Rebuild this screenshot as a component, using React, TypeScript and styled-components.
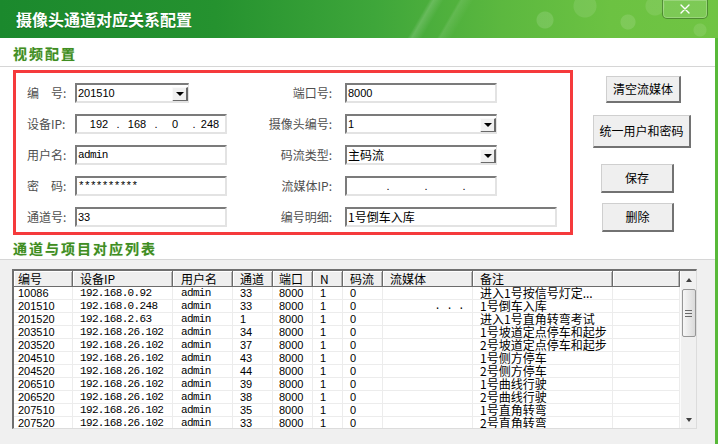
import React from "react";
import styled, { createGlobalStyle } from "styled-components";

const CJK = `"Noto Sans CJK SC", "Liberation Sans", sans-serif`;
const SANS = `"Liberation Sans", "Noto Sans CJK SC", sans-serif`;
const MONO = `"Liberation Mono", "Noto Sans CJK SC", monospace`;

type FontKind = "cjk" | "sans" | "mono";
const fontFor = (f?: FontKind) =>
  f === "mono"
    ? `font-family: ${MONO}; font-size: 11px; letter-spacing: -0.65px;`
    : f === "sans"
    ? `font-family: ${SANS}; font-size: 11px;`
    : `font-family: ${CJK}; font-size: 12px;`;

const GlobalStyle = createGlobalStyle`
  html, body { margin: 0; padding: 0; }
  body {
    width: 718px; height: 444px; overflow: hidden;
    background: #f0f0f0; font-family: ${CJK};
  }
  *, *::before, *::after { box-sizing: border-box; }
`;

const Window = styled.div`
  width: 718px;
  height: 444px;
  display: flex;
  flex-direction: column;
  overflow: hidden;
`;

const TitleBar = styled.header`
  flex: none;
  height: 38px;
  display: flex;
  justify-content: space-between;
  align-items: flex-start;
  padding: 0 10px 0 16px;
  background:
    radial-gradient(circle at 545px 20px, rgba(255,255,255,0.13) 0 8px, transparent 9px),
    radial-gradient(circle at 585px 6px, rgba(255,255,255,0.10) 0 11px, transparent 12px),
    radial-gradient(circle at 628px 22px, rgba(255,255,255,0.12) 0 7px, transparent 8px),
    radial-gradient(circle at 655px 6px, rgba(255,255,255,0.10) 0 9px, transparent 10px),
    radial-gradient(circle at 700px 30px, rgba(255,255,255,0.10) 0 6px, transparent 7px),
    linear-gradient(120deg, transparent 0 58%, rgba(255,255,255,0.16) 58.6%, transparent 60%, transparent 62%, rgba(255,255,255,0.10) 62.4%, transparent 64%),
    linear-gradient(90deg, #1b892d 0%, #25922f 30%, #3ea63a 52%, #5cb83f 70%, #6cc242 85%, #70c443 100%);
`;

const Title = styled.h1`
  margin: 0;
  font-family: ${CJK};
  font-size: 16px;
  font-weight: bold;
  line-height: 39px;
  color: #fff;
  text-shadow: 0 1px 1px rgba(0, 60, 0, 0.35);
`;

const CloseButton = styled.button`
  width: 46px;
  height: 20px;
  margin-top: -1px;
  padding: 0;
  border: 1px solid rgba(40, 90, 20, 0.55);
  border-top-color: #1d1d1d;
  border-radius: 0 0 5px 5px;
  background: rgba(255, 255, 255, 0.1);
  box-shadow: inset 0 0 0 1px rgba(255, 255, 255, 0.22);
  display: flex;
  align-items: center;
  justify-content: center;
`;

const Body = styled.main`
  flex: 1;
  min-height: 0;
  display: flex;
  flex-direction: column;
  border-right: 3px solid #58b939;
`;

const WhitePanel = styled.section`
  flex: none;
  background: #fff;
  display: flex;
  flex-direction: column;
`;

const SectionTitle = styled.h2<{ $h: number }>`
  margin: 0;
  height: ${(p) => p.$h}px;
  padding: 2px 0 0 13px;
  line-height: ${(p) => p.$h - 3}px;
  font-family: ${CJK};
  font-size: 14px;
  font-weight: bold;
  letter-spacing: 2px;
  color: #3f8d22;
  text-shadow: 0 0 1px rgba(80, 160, 40, 0.35);
  border-bottom: 1px solid #d6d6d6;
`;

const ConfigRow = styled.div`
  height: 168px;
  display: flex;
  align-items: flex-start;
`;

const RedBox = styled.div`
  margin: 3px 0 0 13px;
  width: 560px;
  height: 165px;
  border: 3px solid #f53a3c;
  padding: 10px 0 0 11px;
  display: grid;
  grid-template-columns: 48px 152px 118px 1fr;
  grid-auto-rows: 20px;
  row-gap: 11px;
  align-items: center;
`;

const Label = styled.span<{ $right?: boolean }>`
  font-family: ${CJK};
  font-size: 12px;
  line-height: 20px;
  color: #4f4f4f;
  white-space: nowrap;
  text-align: ${(p) => (p.$right ? "right" : "left")};
  padding-right: ${(p) => (p.$right ? "13px" : "0")};
`;

const Field = styled.div<{ $w: number; $font?: FontKind; $pl?: number }>`
  width: ${(p) => p.$w}px;
  height: 20px;
  border-style: solid;
  border-width: 2px;
  border-color: #7b7b7b #e3e3e3 #e3e3e3 #7b7b7b;
  background: #fff;
  display: flex;
  align-items: center;
  padding-left: ${(p) => p.$pl ?? 1}px;
  color: #000;
  white-space: nowrap;
  overflow: hidden;
  line-height: 16px;
  ${(p) => fontFor(p.$font)}
`;

const SelectBox = styled(Field)`
  justify-content: space-between;
  padding-right: 0;
  border-right-width: 1px;
`;

const DropButton = styled.span`
  flex: none;
  width: 16px;
  height: 15px;
  margin-top: 2px;
  background: #f0f0f0;
  border-style: solid;
  border-width: 1px 2px 2px 1px;
  border-color: #fafafa #6a6a6a #6a6a6a #fafafa;
  display: flex;
  align-items: center;
  justify-content: center;
  &::after {
    content: "";
    border-left: 4px solid transparent;
    border-right: 4px solid transparent;
    border-top: 4px solid #000;
  }
`;

const IpSeg = styled.span<{ $last?: boolean }>`
  width: ${(p) => (p.$last ? "auto" : "36px")};
  flex: ${(p) => (p.$last ? "1" : "none")};
  text-align: center;
`;

const IpDot = styled.span`
  width: 2px;
  flex: none;
  display: flex;
  justify-content: center;
  overflow: visible;
`;

const ButtonColumn = styled.div`
  display: flex;
  flex-direction: column;
  align-items: flex-start;
`;

const ActionButton = styled.button<{ $w: number; $h: number; $mt: number; $ml: number }>`
  width: ${(p) => p.$w}px;
  height: ${(p) => p.$h}px;
  margin: ${(p) => p.$mt}px 0 0 ${(p) => p.$ml}px;
  padding: 0;
  background: #efefef;
  border-style: solid;
  border-width: 1px 2px 2px 1px;
  border-color: #cfcfcf #727272 #727272 #cfcfcf;
  font-family: ${CJK};
  font-size: 12px;
  color: #000;
  line-height: 1;
`;

const GrayArea = styled.section`
  flex: 1;
  min-height: 0;
  background: #f0f0f0;
  padding: 9px 0 0 12px;
`;

const Table = styled.div`
  width: 685px;
  height: 160px;
  display: flex;
  background: #fff;
  border-style: solid;
  border-width: 2px 1px 1px 2px;
  border-color: #6f6f6f #dcdcdc #dcdcdc #6f6f6f;
  overflow: hidden;
`;

const TableMain = styled.div`
  flex: 1;
  min-width: 0;
  overflow: hidden;
`;

const COLS = "59px 100px 60px 40px 40px 30px 40px 90px 140px 67px";

const HeadRow = styled.div`
  display: grid;
  grid-template-columns: ${COLS};
  height: 16px;
`;

const HeadCell = styled.div<{ $pad: number }>`
  height: 16px;
  background: #efefef;
  border-right: 1px solid #6c6c6c;
  border-bottom: 1px solid #6c6c6c;
  box-shadow: inset 1px 1px 0 #fff, inset -1px 0 0 #b4b4b4;
  font-family: ${CJK};
  font-size: 12px;
  line-height: 15px;
  color: #000;
  padding-left: ${(p) => p.$pad}px;
  white-space: nowrap;
  overflow: hidden;
`;

const DataRow = styled.div`
  display: grid;
  grid-template-columns: ${COLS};
  height: 13px;
`;

const DataCell = styled.div<{ $pad: number; $font?: FontKind; $align?: "left" | "right" }>`
  height: 13px;
  border-right: 1px solid #ececec;
  border-bottom: 1px solid #ececec;
  padding: 0 ${(p) => (p.$align === "right" ? "8px" : "0")} 0 ${(p) => p.$pad}px;
  text-align: ${(p) => p.$align ?? "left"};
  line-height: 12px;
  color: #000;
  white-space: nowrap;
  overflow-x: clip;
  overflow-y: visible;
  ${(p) => fontFor(p.$font)}
`;

const ScrollBar = styled.div`
  width: 16px;
  flex: none;
  background: #f0f0f0;
  border-left: 1px solid #fbfbfb;
  display: flex;
  flex-direction: column;
  align-items: center;
`;

const ScrollArrow = styled.div<{ $down?: boolean }>`
  width: 15px;
  height: 17px;
  flex: none;
  display: flex;
  align-items: center;
  justify-content: center;
  &::after {
    content: "";
    border-left: 3.5px solid transparent;
    border-right: 3.5px solid transparent;
    ${(p) => (p.$down ? "border-top: 4px solid #404040;" : "border-bottom: 4px solid #404040;")}
  }
`;

const Thumb = styled.div`
  width: 14px;
  height: 48px;
  margin-top: 1px;
  border: 1px solid #969696;
  border-radius: 2px;
  background: linear-gradient(90deg, #f7f7f7, #dadada);
  display: flex;
  flex-direction: column;
  align-items: center;
  justify-content: center;
  gap: 2px;
`;

const Grip = styled.span`
  width: 7px;
  height: 1px;
  background: #6a6a6a;
`;

const Track = styled.div`
  flex: 1;
`;

type Col = { title: string; pad: number; font?: FontKind; align?: "left" | "right" };
const columns: Col[] = [
  { title: "编号", pad: 4, font: "sans" },
  { title: "设备IP", pad: 7, font: "mono" },
  { title: "用户名", pad: 8, font: "mono" },
  { title: "通道", pad: 7, font: "sans" },
  { title: "端口", pad: 6, font: "sans" },
  { title: "N", pad: 7, font: "sans" },
  { title: "码流", pad: 7, font: "sans" },
  { title: "流媒体", pad: 7, font: "mono", align: "right" },
  { title: "备注", pad: 7, font: "cjk" },
  { title: "", pad: 0 },
];

const rows: string[][] = [
  ["10086", "192.168.0.92", "admin", "33", "8000", "1", "0", "", "进入1号按信号灯定..."],
  ["201510", "192.168.0.248", "admin", "33", "8000", "1", "0", ". . .", "1号倒车入库"],
  ["201520", "192.168.2.63", "admin", "1", "8000", "1", "0", "", "进入1号直角转弯考试"],
  ["203510", "192.168.26.102", "admin", "34", "8000", "1", "0", "", "1号坡道定点停车和起步"],
  ["203520", "192.168.26.102", "admin", "37", "8000", "1", "0", "", "2号坡道定点停车和起步"],
  ["204510", "192.168.26.102", "admin", "43", "8000", "1", "0", "", "1号侧方停车"],
  ["204520", "192.168.26.102", "admin", "44", "8000", "1", "0", "", "2号侧方停车"],
  ["206510", "192.168.26.102", "admin", "39", "8000", "1", "0", "", "1号曲线行驶"],
  ["206520", "192.168.26.102", "admin", "38", "8000", "1", "0", "", "2号曲线行驶"],
  ["207510", "192.168.26.102", "admin", "35", "8000", "1", "0", "", "1号直角转弯"],
  ["207520", "192.168.26.102", "admin", "33", "8000", "1", "0", "", "2号直角转弯"],
];

const IpField: React.FC<{ parts: string[] }> = ({ parts }) => (
  <Field $w={152} $font="sans" $pl={4}>
    <IpSeg>{parts[0]}</IpSeg>
    <IpDot>.</IpDot>
    <IpSeg>{parts[1]}</IpSeg>
    <IpDot>.</IpDot>
    <IpSeg>{parts[2]}</IpSeg>
    <IpDot>.</IpDot>
    <IpSeg $last>{parts[3]}</IpSeg>
  </Field>
);

const Select: React.FC<{ w: number; font?: FontKind; value: string }> = ({ w, font, value }) => (
  <SelectBox $w={w} $font={font}>
    <span>{value}</span>
    <DropButton />
  </SelectBox>
);

export default function App() {
  return (
    <>
      <GlobalStyle />
      <Window>
        <TitleBar>
          <Title>摄像头通道对应关系配置</Title>
          <CloseButton aria-label="关闭">
            <svg width="10" height="10" viewBox="0 0 10 10">
              <path d="M1 1 L9 9 M9 1 L1 9" stroke="#fff" strokeWidth="1.4" strokeLinecap="round" />
            </svg>
          </CloseButton>
        </TitleBar>
        <Body>
          <WhitePanel>
            <SectionTitle $h={29}>视频配置</SectionTitle>
            <ConfigRow>
              <RedBox>
                <Label>编　号:</Label>
                <Select w={114} font="sans" value="201510" />
                <Label $right>端口号:</Label>
                <Field $w={152} $font="sans">8000</Field>

                <Label>设备IP:</Label>
                <IpField parts={["192", "168", "0", "248"]} />
                <Label $right>摄像头编号:</Label>
                <Select w={152} font="sans" value="1" />

                <Label>用户名:</Label>
                <Field $w={152} $font="mono">admin</Field>
                <Label $right>码流类型:</Label>
                <Select w={152} font="cjk" value="主码流" />

                <Label>密　码:</Label>
                <Field $w={152} $font="mono">**********</Field>
                <Label $right>流媒体IP:</Label>
                <IpField parts={["", "", "", ""]} />

                <Label>通道号:</Label>
                <Field $w={152} $font="sans">33</Field>
                <Label $right>编号明细:</Label>
                <Field $w={212} $font="cjk">1号倒车入库</Field>
              </RedBox>
              <ButtonColumn>
                <ActionButton $w={75} $h={27} $mt={9} $ml={33}>清空流媒体</ActionButton>
                <ActionButton $w={98} $h={33} $mt={12} $ml={20}>统一用户和密码</ActionButton>
                <ActionButton $w={73} $h={29} $mt={16} $ml={28}>保存</ActionButton>
                <ActionButton $w={72} $h={29} $mt={10} $ml={29}>删除</ActionButton>
              </ButtonColumn>
            </ConfigRow>
            <SectionTitle $h={25}>通道与项目对应列表</SectionTitle>
          </WhitePanel>
          <GrayArea>
            <Table>
              <TableMain>
                <HeadRow>
                  {columns.map((c, i) => (
                    <HeadCell key={i} $pad={c.pad}>{c.title}</HeadCell>
                  ))}
                </HeadRow>
                {rows.map((r, ri) => (
                  <DataRow key={ri}>
                    {columns.map((c, ci) => (
                      <DataCell key={ci} $pad={c.pad} $font={c.font} $align={c.align}>
                        {r[ci] ?? ""}
                      </DataCell>
                    ))}
                  </DataRow>
                ))}
              </TableMain>
              <ScrollBar>
                <ScrollArrow />
                <Thumb>
                  <Grip />
                  <Grip />
                  <Grip />
                </Thumb>
                <Track />
                <ScrollArrow $down />
              </ScrollBar>
            </Table>
          </GrayArea>
        </Body>
      </Window>
    </>
  );
}
